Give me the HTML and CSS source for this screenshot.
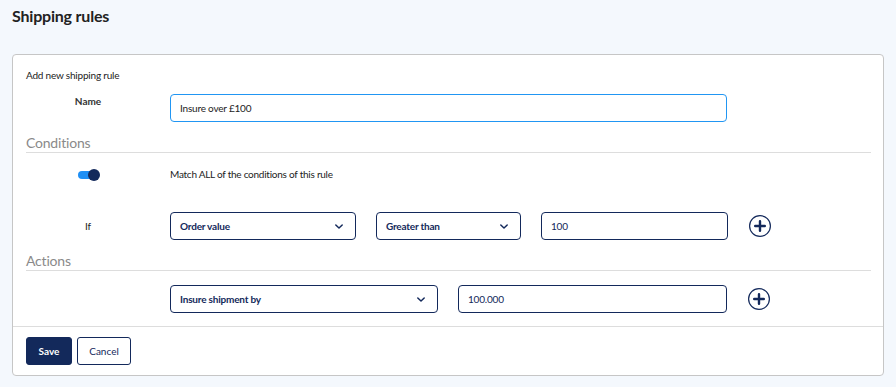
FILE: index.html
```html
<!DOCTYPE html>
<html lang="en">
<head>
  <meta charset="UTF-8" />
  <meta name="viewport" content="width=device-width, initial-scale=1.0"/>
  <title>Shipping rules</title>
  <link rel="stylesheet" href="styles.css">
</head>
<body>

  <header>
    <h1>Shipping rules</h1>
  </header>

  <div class="card">
    <div class="card-body">
      <p class="intro">Add new shipping rule</p>

      <div class="row row-top">
        <label class="row-label" for="ruleName">Name</label>
        <div class="fields">
          <input id="ruleName" class="field field-name focused" type="text" value="Insure over £100">
        </div>
      </div>

      <!-- Conditions -->
      <h2 class="section-title">Conditions</h2>

      <div class="row row-toggle">
        <div class="row-label">
          <span class="toggle"><span class="toggle-knob"></span></span>
        </div>
        <div class="fields">
          <span class="toggle-text">Match ALL of the conditions of this rule</span>
        </div>
      </div>

      <div class="row row-if">
        <div class="row-label">If</div>
        <div class="fields">
          <div class="select select-condition">
            <span>Order value</span>
            <svg class="chevron" viewBox="0 0 10 6" width="8" height="5"><path d="M1 1l4 4 4-4" fill="none" stroke="#13295b" stroke-width="1.8" stroke-linecap="round" stroke-linejoin="round"/></svg>
          </div>
          <div class="select select-operator">
            <span>Greater than</span>
            <svg class="chevron" viewBox="0 0 10 6" width="8" height="5"><path d="M1 1l4 4 4-4" fill="none" stroke="#13295b" stroke-width="1.8" stroke-linecap="round" stroke-linejoin="round"/></svg>
          </div>
          <input class="field field-value" type="text" value="100">
          <button class="add-btn" aria-label="Add condition">
            <svg viewBox="0 0 24 24" width="24" height="24"><circle cx="12" cy="12" r="10.4" fill="none" stroke="#13295b" stroke-width="1.2"/><path d="M12 7.2v9.6M7.2 12h9.6" stroke="#13295b" stroke-width="2.4" stroke-linecap="round"/></svg>
          </button>
        </div>
      </div>

      <!-- Actions -->
      <h2 class="section-title">Actions</h2>

      <div class="row row-action">
        <div class="row-label"></div>
        <div class="fields">
          <div class="select select-action">
            <span>Insure shipment by</span>
            <svg class="chevron" viewBox="0 0 10 6" width="8" height="5"><path d="M1 1l4 4 4-4" fill="none" stroke="#13295b" stroke-width="1.8" stroke-linecap="round" stroke-linejoin="round"/></svg>
          </div>
          <input class="field field-amount" type="text" value="100.000">
          <button class="add-btn" aria-label="Add action">
            <svg viewBox="0 0 24 24" width="24" height="24"><circle cx="12" cy="12" r="10.4" fill="none" stroke="#13295b" stroke-width="1.2"/><path d="M12 7.2v9.6M7.2 12h9.6" stroke="#13295b" stroke-width="2.4" stroke-linecap="round"/></svg>
          </button>
        </div>
      </div>
    </div>

    <div class="card-footer">
      <button class="btn btn-save">Save</button>
      <button class="btn btn-cancel">Cancel</button>
    </div>
  </div>

</body>
</html>
```

FILE: styles.css
```css
* {
  box-sizing: border-box;
  margin: 0;
  padding: 0;
}

body {
  font-family: Lato, 'Noto Sans', sans-serif;
  background: #f4f8fd;
  color: #222;
}

header {
  padding: 6px 12px 0;
}

header h1 {
  font-size: 16px;
  line-height: 20px;
  font-weight: 700;
  color: #222;
  letter-spacing: -0.2px;
}

.card {
  margin: 28px 12px 0;
  background: #ffffff;
  border: 1px solid #c6c6c6;
  border-radius: 4px;
}

.card-body {
  padding: 13px 12px 13px 13px;
}

.intro {
  font-size: 10px;
  line-height: 14px;
  color: #222;
  letter-spacing: -0.2px;
}

.row {
  display: grid;
  grid-template-columns: 124px 1fr;
  column-gap: 20px;
}

.row-label {
  font-size: 10px;
  line-height: 14px;
  text-align: center;
  color: #222;
}

.row-top {
  margin-top: 12px;
  align-items: start;
}

.row-top .row-label {
  font-weight: 700;
  color: #333;
}

.row-toggle {
  margin-top: 14px;
  align-items: center;
}

.row-if {
  margin-top: 31px;
  align-items: center;
}

.row-action {
  margin-top: 14px;
  align-items: center;
}

.fields {
  display: flex;
  align-items: center;
  gap: 20px;
}

.field,
.select {
  height: 28px;
  border: 1px solid #13295b;
  border-radius: 4px;
  background: #fff;
  font-family: inherit;
  font-size: 10px;
  color: #13295b;
  padding: 0 9px;
  outline: none;
  letter-spacing: -0.2px;
}

.field-name {
  width: 557px;
  border-color: #2196f3;
  color: #222;
}

.select {
  display: flex;
  align-items: center;
  justify-content: space-between;
  font-weight: 700;
  padding-right: 12px;
}

.select-condition { width: 186px; }
.select-operator { width: 145px; }
.select-action { width: 268px; }

.field-value { width: 187px; }
.field-amount { width: 269px; }

.chevron {
  display: block;
}

.add-btn {
  width: 24px;
  height: 24px;
  border: none;
  background: none;
  cursor: pointer;
}

.add-btn svg {
  display: block;
}

.section-title {
  margin-top: 12px;
  font-size: 14px;
  line-height: 18px;
  font-weight: 400;
  color: #8a8a8a;
  border-bottom: 1px solid #dddddd;
  letter-spacing: -0.2px;
}

.toggle {
  display: inline-block;
  position: relative;
  width: 20px;
  height: 8px;
  border-radius: 4px;
  background: #1e8ff5;
  vertical-align: middle;
}

.toggle-knob {
  position: absolute;
  right: -2px;
  top: -2px;
  width: 12px;
  height: 12px;
  border-radius: 50%;
  background: #13295b;
}

.toggle-text {
  font-size: 10px;
  line-height: 14px;
  color: #222;
  letter-spacing: -0.25px;
}

.card-footer {
  border-top: 1px solid #dddddd;
  padding: 10px 13px;
  display: flex;
  gap: 5px;
}

.btn {
  height: 28px;
  border-radius: 3px;
  font-family: inherit;
  font-size: 10px;
  cursor: pointer;
}

.btn-save {
  width: 46px;
  background: #13295b;
  border: 1px solid #13295b;
  color: #ffffff;
  font-weight: 700;
}

.btn-cancel {
  width: 54px;
  background: #ffffff;
  border: 1px solid #13295b;
  color: #13295b;
}
```
